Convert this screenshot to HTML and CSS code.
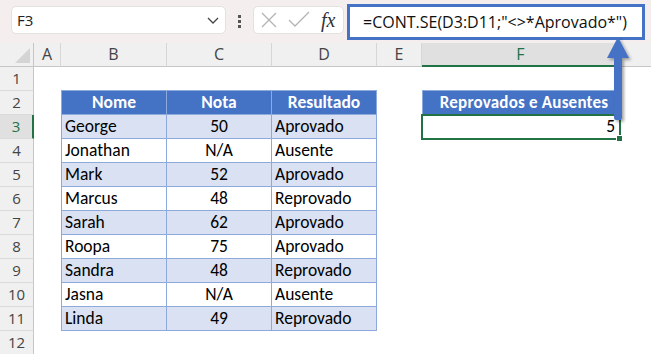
FILE: index.html
```html
<!DOCTYPE html>
<html lang="pt">

<head>
    <meta charset="UTF-8">
    <meta name="viewport" content="width=device-width, initial-scale=1.0">
    <title>CONT.SE</title>
    <link rel="stylesheet" href="styles.css">
</head>

<body>

    <div class="app">

        <!-- Formula bar -->
        <div class="topbar">
            <div class="namebox">
                <span>F3</span>
                <svg class="chev" width="12" height="7" viewBox="0 0 12 7">
                    <polyline points="1,1 6,6 11,1" fill="none" stroke="#444" stroke-width="1.3" />
                </svg>
            </div>
            <div class="dots">
                <div></div>
                <div></div>
                <div></div>
            </div>
            <div class="fxbox">
                <svg width="18" height="18" viewBox="0 0 18 18">
                    <path d="M2 2 L16 16 M16 2 L2 16" stroke="#b4b4b4" stroke-width="1.3" fill="none" />
                </svg>
                <svg width="22" height="18" viewBox="0 0 22 18">
                    <polyline points="1,9 7,15 21,1" stroke="#b4b4b4" stroke-width="1.3" fill="none" />
                </svg>
                <span class="fx">fx</span>
            </div>
            <div class="formula">=CONT.SE(D3:D11;"&lt;&gt;*Aprovado*")</div>
        </div>

        <!-- Sheet -->
        <div class="sheet">
            <div class="row colheads">
                <div class="rh corner"><div class="tri"></div></div>
                <div class="ch a">A</div>
                <div class="ch b">B</div>
                <div class="ch c">C</div>
                <div class="ch d">D</div>
                <div class="ch e">E</div>
                <div class="ch f sel">F</div>
                <div class="ch g"></div>
            </div>

            <div class="row">
                <div class="rh">1</div>
                <div class="cell a"></div>
                <div class="cell b top"></div>
                <div class="cell c top"></div>
                <div class="cell d top"></div>
                <div class="cell e"></div>
                <div class="cell f top"></div>
                <div class="cell g"></div>
            </div>

            <div class="row">
                <div class="rh">2</div>
                <div class="cell a"></div>
                <div class="cell b tb head">Nome</div>
                <div class="cell c tb head">Nota</div>
                <div class="cell d tb head">Resultado</div>
                <div class="cell e"></div>
                <div class="cell f tb head fhead">Reprovados e Ausentes</div>
                <div class="cell g"></div>
            </div>

            <div class="row">
                <div class="rh selrow">3</div>
                <div class="cell a"></div>
                <div class="cell b tb band">George</div>
                <div class="cell c tb band num">50</div>
                <div class="cell d tb band">Aprovado</div>
                <div class="cell e"></div>
                <div class="cell f active">5<div class="handle"></div></div>
                <div class="cell g"></div>
            </div>

            <div class="row">
                <div class="rh">4</div>
                <div class="cell a"></div>
                <div class="cell b tb">Jonathan</div>
                <div class="cell c tb num">N/A</div>
                <div class="cell d tb">Ausente</div>
                <div class="cell e"></div>
                <div class="cell f"></div>
                <div class="cell g"></div>
            </div>

            <div class="row">
                <div class="rh">5</div>
                <div class="cell a"></div>
                <div class="cell b tb band">Mark</div>
                <div class="cell c tb band num">52</div>
                <div class="cell d tb band">Aprovado</div>
                <div class="cell e"></div>
                <div class="cell f"></div>
                <div class="cell g"></div>
            </div>

            <div class="row">
                <div class="rh">6</div>
                <div class="cell a"></div>
                <div class="cell b tb">Marcus</div>
                <div class="cell c tb num">48</div>
                <div class="cell d tb">Reprovado</div>
                <div class="cell e"></div>
                <div class="cell f"></div>
                <div class="cell g"></div>
            </div>

            <div class="row">
                <div class="rh">7</div>
                <div class="cell a"></div>
                <div class="cell b tb band">Sarah</div>
                <div class="cell c tb band num">62</div>
                <div class="cell d tb band">Aprovado</div>
                <div class="cell e"></div>
                <div class="cell f"></div>
                <div class="cell g"></div>
            </div>

            <div class="row">
                <div class="rh">8</div>
                <div class="cell a"></div>
                <div class="cell b tb">Roopa</div>
                <div class="cell c tb num">75</div>
                <div class="cell d tb">Aprovado</div>
                <div class="cell e"></div>
                <div class="cell f"></div>
                <div class="cell g"></div>
            </div>

            <div class="row">
                <div class="rh">9</div>
                <div class="cell a"></div>
                <div class="cell b tb band">Sandra</div>
                <div class="cell c tb band num">48</div>
                <div class="cell d tb band">Reprovado</div>
                <div class="cell e"></div>
                <div class="cell f"></div>
                <div class="cell g"></div>
            </div>

            <div class="row">
                <div class="rh">10</div>
                <div class="cell a"></div>
                <div class="cell b tb">Jasna</div>
                <div class="cell c tb num">N/A</div>
                <div class="cell d tb">Ausente</div>
                <div class="cell e"></div>
                <div class="cell f"></div>
                <div class="cell g"></div>
            </div>

            <div class="row">
                <div class="rh">11</div>
                <div class="cell a"></div>
                <div class="cell b tb band">Linda</div>
                <div class="cell c tb band num">49</div>
                <div class="cell d tb band">Reprovado</div>
                <div class="cell e"></div>
                <div class="cell f"></div>
                <div class="cell g"></div>
            </div>

            <div class="row">
                <div class="rh">12</div>
                <div class="cell a"></div>
                <div class="cell b"></div>
                <div class="cell c"></div>
                <div class="cell d"></div>
                <div class="cell e"></div>
                <div class="cell f"></div>
                <div class="cell g"></div>
            </div>
        </div>

        <!-- Callout arrow from F3 up to the formula -->
        <svg class="arrow" width="40" height="96" viewBox="0 0 40 96">
            <defs>
                <filter id="shadow" x="-50%" y="-20%" width="200%" height="140%">
                    <feDropShadow dx="2" dy="2" stdDeviation="1.5" flood-color="#000" flood-opacity="0.35" />
                </filter>
            </defs>
            <g filter="url(#shadow)">
                <rect x="10" y="20" width="8" height="64" rx="2" fill="#4472c4" />
                <polygon points="14,1 3,22 25,22" fill="#4472c4" />
            </g>
        </svg>

    </div>

</body>

</html>
```

FILE: styles.css
```css
body {
    margin: 0;
    padding: 0;
    background: #fff;
    font-family: "Open Sans", "Noto Sans", sans-serif;
    color: #222;
}

.app {
    width: 651px;
    height: 354px;
    position: relative;
    overflow: hidden;
}

/* Formula bar */
.topbar {
    height: 43px;
    background-color: #f4eeee;
    display: flex;
    align-items: flex-start;
    box-sizing: border-box;
    padding-left: 11px;
}

.namebox {
    width: 215px;
    height: 28px;
    margin-top: 6px;
    background: #fff;
    border-radius: 5px;
    box-sizing: border-box;
    border: 1px solid #e6e0e0;
    display: flex;
    align-items: center;
    justify-content: space-between;
    padding: 0 6px 0 5px;
    font-size: 15px;
    color: #222;
}

.namebox .chev {
    margin-top: 1px;
}

.dots {
    width: 27px;
    display: flex;
    flex-direction: column;
    align-items: center;
    gap: 2px;
    margin-top: 15px;
}

.dots div {
    width: 3px;
    height: 3px;
    background-color: #555;
}

.fxbox {
    width: 91px;
    height: 28px;
    margin-top: 6px;
    background: #fff;
    border-radius: 5px;
    box-sizing: border-box;
    border: 1px solid #e6e0e0;
    display: flex;
    align-items: center;
    gap: 10px;
    padding-left: 6px;
}

.fxbox .fx {
    font-family: "Liberation Serif", "DejaVu Serif", serif;
    font-style: italic;
    font-size: 20px;
    color: #333;
    margin-left: 1px;
}

.formula {
    width: 298px;
    height: 36px;
    margin-top: 4px;
    margin-left: 3px;
    box-sizing: border-box;
    border: 3px solid #4472c4;
    background: #fff;
    font-size: 16px;
    line-height: 30px;
    padding-left: 13px;
    color: #111;
    white-space: nowrap;
}

/* Sheet grid */
.row {
    display: flex;
    height: 24px;
}

.row > div {
    box-sizing: border-box;
    height: 24px;
    flex-shrink: 0;
}

.rh {
    width: 34px;
    background-color: #f0f0f0;
    border-right: 1px solid #c6c6c6;
    border-bottom: 1px solid #dadada;
    text-align: center;
    font-size: 15px;
    line-height: 23px;
    color: #444;
}

.rh.selrow {
    background-color: #e0e0e0;
    color: #217346;
    border-right: 2px solid #217346;
}

.a { width: 27px; }
.b { width: 106px; }
.c { width: 105px; }
.d { width: 105px; }
.e { width: 45px; }
.f { width: 198px; }
.g { flex: 1; }

.colheads .rh {
    border-bottom: 1px solid #c6c6c6;
}

.corner {
    position: relative;
}

.corner .tri {
    position: absolute;
    right: 3px;
    bottom: 3px;
    width: 0;
    height: 0;
    border-left: 15px solid transparent;
    border-bottom: 15px solid #d4d4d4;
}

.ch {
    background-color: #f0f0f0;
    border-right: 1px solid #d6d6d6;
    border-bottom: 1px solid #c6c6c6;
    text-align: center;
    font-size: 16px;
    line-height: 23px;
    color: #444;
}

.ch.sel {
    background-color: #e0e0e0;
    color: #217346;
    border-bottom: 2px solid #217346;
}

.ch.g {
    border-right: none;
}

.cell {
    font-family: Carlito, Lato, "Liberation Sans", sans-serif;
    font-size: 17.5px;
    line-height: 23px;
    color: #000;
    padding-left: 3px;
    white-space: nowrap;
}

.cell.top {
    border-bottom: 1px solid #8ea9db;
}

.cell.tb {
    border-right: 1px solid #8ea9db;
    border-bottom: 1px solid #8ea9db;
}

.cell.b.tb,
.cell.f.tb {
    border-left: 1px solid #8ea9db;
}

.cell.band {
    background-color: #d9e1f2;
}

.cell.head {
    background-color: #4472c4;
    color: #fff;
    font-weight: bold;
    text-align: center;
    padding-left: 0;
}

.cell.fhead {
    font-size: 17px;
    letter-spacing: 0.2px;
    padding-left: 6px;
}

.cell.num {
    text-align: center;
    padding-left: 0;
}

.cell.active {
    position: relative;
    text-align: right;
    padding-right: 5px;
}

.cell.active::after {
    content: "";
    position: absolute;
    top: -1px;
    left: -1px;
    right: -1px;
    bottom: -1px;
    border: 2px solid #217346;
}

.cell.active .handle {
    position: absolute;
    right: -3px;
    bottom: -3px;
    width: 5px;
    height: 5px;
    background-color: #217346;
    border: 1px solid #fff;
    z-index: 1;
}

/* Callout arrow */
.arrow {
    position: absolute;
    left: 604px;
    top: 36px;
}
```
